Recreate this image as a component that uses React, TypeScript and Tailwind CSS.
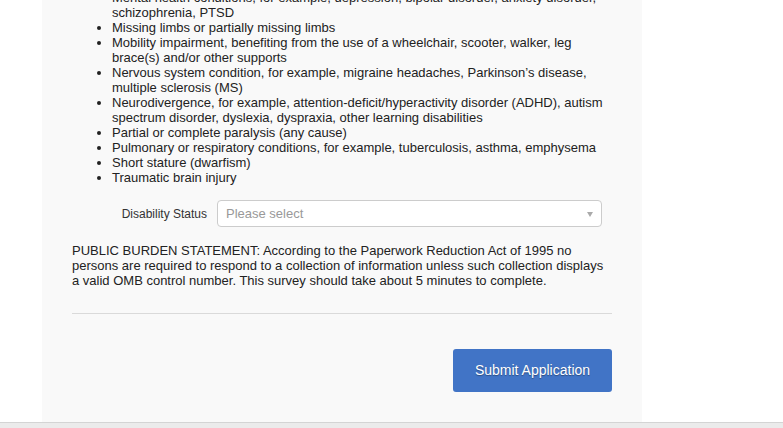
import React from 'react';

const conditions: string[] = [
  'Mental health conditions, for example, depression, bipolar disorder, anxiety disorder, schizophrenia, PTSD',
  'Missing limbs or partially missing limbs',
  'Mobility impairment, benefiting from the use of a wheelchair, scooter, walker, leg brace(s) and/or other supports',
  'Nervous system condition, for example, migraine headaches, Parkinson’s disease, multiple sclerosis (MS)',
  'Neurodivergence, for example, attention-deficit/hyperactivity disorder (ADHD), autism spectrum disorder, dyslexia, dyspraxia, other learning disabilities',
  'Partial or complete paralysis (any cause)',
  'Pulmonary or respiratory conditions, for example, tuberculosis, asthma, emphysema',
  'Short stature (dwarfism)',
  'Traumatic brain injury',
];

const App: React.FC = () => {
  return (
    <div className="h-[428px] w-[783px] overflow-hidden bg-white flex flex-col font-['Liberation_Sans',Arial,sans-serif] text-[#222]">
      <div className="flex-1 min-h-0 pl-[42px]">
        <div className="w-[600px] h-full bg-[#f9f9f9] px-[30px] overflow-hidden">
          {/* Disability list (scrolled) */}
          <ul className="-mt-[10px] list-disc pl-[40px] text-[13px] leading-[15px]">
            {conditions.map((c) => (
              <li key={c}>{c}</li>
            ))}
          </ul>

          {/* Disability status row */}
          <div className="mt-[15px] flex items-center">
            <label className="w-[145px] pr-[10px] text-right text-[12px] text-[#333]">Disability Status</label>
            <div className="relative w-[385px] h-[27px] bg-white border border-[#cccccc] rounded-[4px] flex items-center pl-[8px]">
              <span className="text-[13px] text-[#999]">Please select</span>
              <span className="absolute right-[8px] top-[11px] w-0 h-0 border-l-[3px] border-r-[3px] border-t-[5px] border-l-transparent border-r-transparent border-t-[#aaa]" />
            </div>
          </div>

          {/* Burden statement */}
          <p className="mt-[16px] text-[13px] leading-[15px]">
            PUBLIC BURDEN STATEMENT: According to the Paperwork Reduction Act of 1995 no persons are required to respond to a collection of information unless such collection displays a valid OMB control number. This survey should take about 5 minutes to complete.
          </p>

          <hr className="mt-[25px] border-0 border-t border-[#dadada]" />

          <div className="mt-[35px] flex justify-end">
            <button className="w-[159px] h-[43px] rounded-[3px] bg-[#4174c6] text-white text-[14px] [text-shadow:0_1px_1px_rgba(0,0,0,0.35)]">
              Submit Application
            </button>
          </div>
        </div>
      </div>
      <div className="h-[6px] bg-[#ebebeb] border-t border-[#d4d4d4]" />
    </div>
  );
};

export default App;
